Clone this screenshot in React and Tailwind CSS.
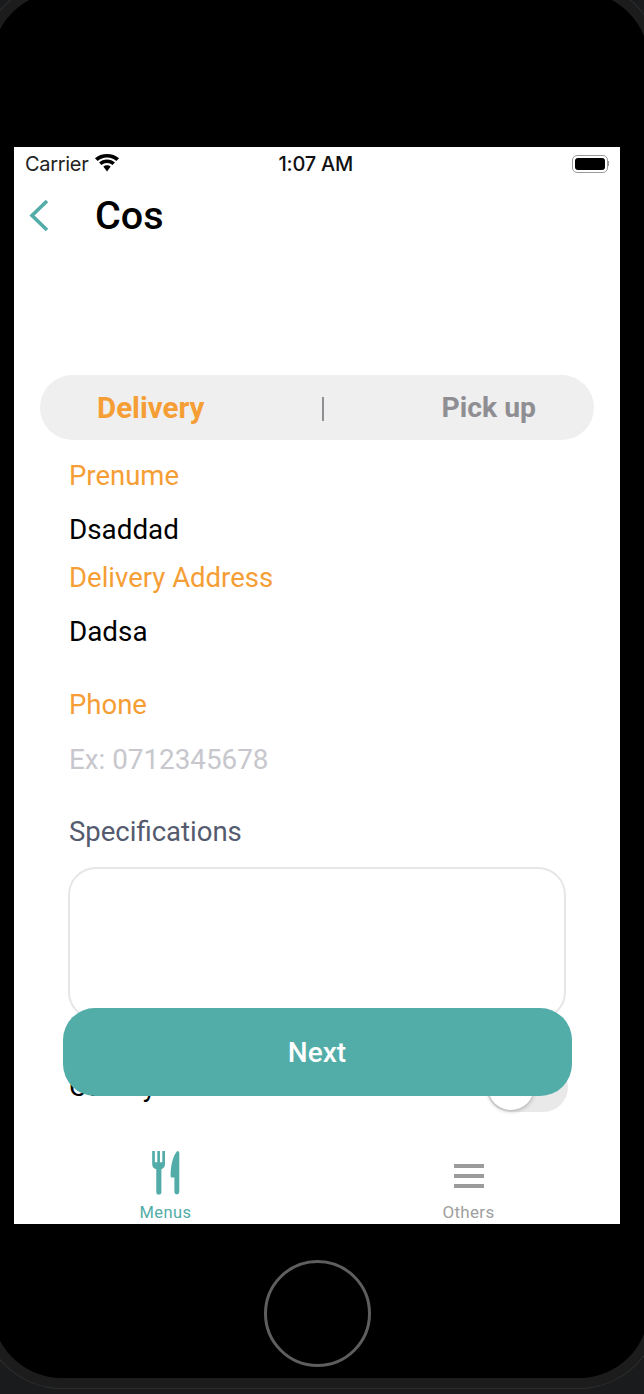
import React from "react";

function Wifi() {
  return (
    <svg width="26" height="18" viewBox="0 0 24 17" fill="#000">
      <path d="M12 3.200c3.400 0 6.500 1.300 8.800 3.300L23.400 4C20.400 1.500 16.400 0 12 0S3.600 1.500.6 4l2.600 2.500C5.500 4.500 8.600 3.200 12 3.200z" />
      <path d="M12 8.600c2 0 3.800.7 5.200 1.900l2.300-2.400C17.500 6.300 14.900 5.300 12 5.300S6.500 6.300 4.500 8.100l2.300 2.400c1.400-1.200 3.200-1.900 5.200-1.900z" />
      <path d="M12 10.600c-1.300 0-2.500.5-3.500 1.300L12 16.500l3.500-4.600c-1-.8-2.200-1.300-3.500-1.300z" />
    </svg>
  );
}

function Battery() {
  return (
    <div className="flex items-center">
      <div className="w-[36px] h-[18px] rounded-[5px] border-[1.500px] border-[#9a9a9a] p-[2px]">
        <div className="w-full h-full rounded-[3px] bg-black" />
      </div>
      <div className="w-[1px] h-[5px] bg-[#9a9a9a]" />
    </div>
  );
}

function ForkKnife() {
  return (
    <svg width="28" height="44" viewBox="0 0 27 43" fill="#52aca8">
      <path d="M0 0h2.600v11h2.400V0h2.600v11h2.300V0h2.600v13c0 2.500-1.500 4.200-3.500 4.900V40a2.500 2.500 0 0 1-5 0V17.900C1.500 17.200 0 15.500 0 13z" />
      <path d="M24.500 0c1.200 0 2 .8 2 2v38a2.400 2.400 0 0 1-4.800 0V26h-2c-1 0-1.700-.7-1.700-1.600 0-9 1.800-19.400 6.500-24.400z" />
    </svg>
  );
}

function Field({ label, value, labelCls, valueCls, gap = "mt-[24px]" }) {
  return (
    <div className="flex flex-col">
      <div className={"h-[30px] leading-[30px] text-[27.5px] " + labelCls}>{label}</div>
      <div className={gap + " h-[30px] leading-[30px] text-[27.8px] " + valueCls}>{value}</div>
    </div>
  );
}

export default function App() {
  return (
    <div className="w-[644px] h-[1394px] bg-[#1a1b1c] overflow-hidden font-['Roboto',sans-serif]">
      {/* device bezel */}
      <div className="-ml-[18px] -mt-[18px] w-[677px] h-[1406px] p-[10px] bg-[#1c1c1c] rounded-[80px] shadow-[0_0_0_1px_#2e2e2e]">
        <div className="h-full pl-[22px] pt-[155px] bg-black rounded-[70px] flex flex-col">
          <div className="relative w-[606px] h-[1077px] bg-white flex flex-col shrink-0">
            {/* status bar */}
            <div className="h-[33px] px-[11px] flex items-center">
              <span className="text-[20px] text-[#222] font-['Inter',sans-serif] tracking-[-0.3px]">Carrier</span>
              <div className="ml-[6px] mb-[1px]"><Wifi /></div>
              <span className="ml-[158px] text-[20px] font-medium text-[#111] font-['Inter',sans-serif] tracking-[-0.2px]">1:07 AM</span>
              <div className="ml-auto"><Battery /></div>
            </div>

            {/* header */}
            <div className="h-[70px] flex items-center pl-[15px]">
              <svg width="20" height="33" viewBox="0 0 20 33" fill="none" stroke="#52aca8" strokeWidth="3.600">
                <path d="M18 2L3 16.500 18 31" />
              </svg>
              <span className="ml-[46px] mt-[2px] text-[39.5px] font-medium text-black">Cos</span>
            </div>

            {/* delivery / pick up */}
            <div className="mt-[125px] mx-[26px] h-[65px] pt-[1px] rounded-[33px] bg-[#efefef] flex items-center">
              <div className="w-[282px] pl-[57px] text-[29.5px] font-bold text-[#f59e35]">Delivery</div>
              <div className="w-[2px] h-[24px] bg-[#8e8e93] mt-[2px]" />
              <div className="flex-1 pr-[58px] text-right text-[28.300px] font-bold text-[#8e8e93]">Pick up</div>
            </div>

            {/* form */}
            <div className="pl-[55px] flex flex-col">
              <div className="mt-[21px]">
                <Field label="Prenume" value="Dsaddad" labelCls="text-[#f59e35]" valueCls="text-black" />
              </div>
              <div className="mt-[18px]">
                <Field label="Delivery Address" value="Dadsa" labelCls="text-[#f59e35]" valueCls="text-black" />
              </div>
              <div className="mt-[43px]">
                <Field label="Phone" value="Ex: 0712345678" gap="mt-[25px]" labelCls="text-[#f59e35]" valueCls="text-[#c7c7cd]" />
              </div>
              <div className="mt-[42px] h-[30px] leading-[30px] text-[27.5px] text-[#555b6e]">Specifications</div>
            </div>
            <div className="mt-[20px] ml-[54px] w-[498px] h-[153px] rounded-[28px] border-2 border-[#e6e6e6] shrink-0" />

            {/* row under the button */}
            <div className="mt-[42px] pl-[55px] pr-[52px] flex items-center justify-between h-[50px] shrink-0">
              <span className="text-[27.8px] text-black">Cutlery</span>
              <div className="w-[82px] h-[50px] rounded-[25px] bg-[#e9e9ea] p-[2px]">
                <div className="w-[46px] h-[46px] rounded-full bg-white shadow-[0_1px_4px_rgba(0,0,0,0.3)]" />
              </div>
            </div>

            {/* next button, lies over the form */}
            <div className="absolute left-[48.500px] top-[861px] w-[509px] h-[88px] pt-[2px] rounded-[32px] bg-[#52aca8] flex items-center justify-center">
              <span className="text-[28px] font-medium text-white">Next</span>
            </div>

            {/* tab bar */}
            <div className="mt-auto h-[79px] grid grid-cols-2">
              <div className="flex flex-col items-center">
                <div className="h-[56px] flex items-center"><ForkKnife /></div>
                <span className="mt-[2px] leading-[20px] text-[16.500px] tracking-[0.4px] text-[#52aca8]">Menus</span>
              </div>
              <div className="flex flex-col items-center">
                <div className="h-[56px] pt-[6px] flex flex-col justify-center gap-[6.500px]">
                  <div className="w-[30px] h-[3.500px] bg-[#9b9b9b]" />
                  <div className="w-[30px] h-[3.500px] bg-[#9b9b9b]" />
                  <div className="w-[30px] h-[3.500px] bg-[#9b9b9b]" />
                </div>
                <span className="mt-[1px] leading-[20px] text-[17px] tracking-[0.3px] text-[#a0a0a0]">Others</span>
              </div>
            </div>
          </div>

          {/* home button */}
          <div className="mt-[36px] ml-[250px] w-[107px] h-[107px] rounded-full border-[3px] border-[#5e5e5e] shrink-0" />
        </div>
      </div>
    </div>
  );
}
